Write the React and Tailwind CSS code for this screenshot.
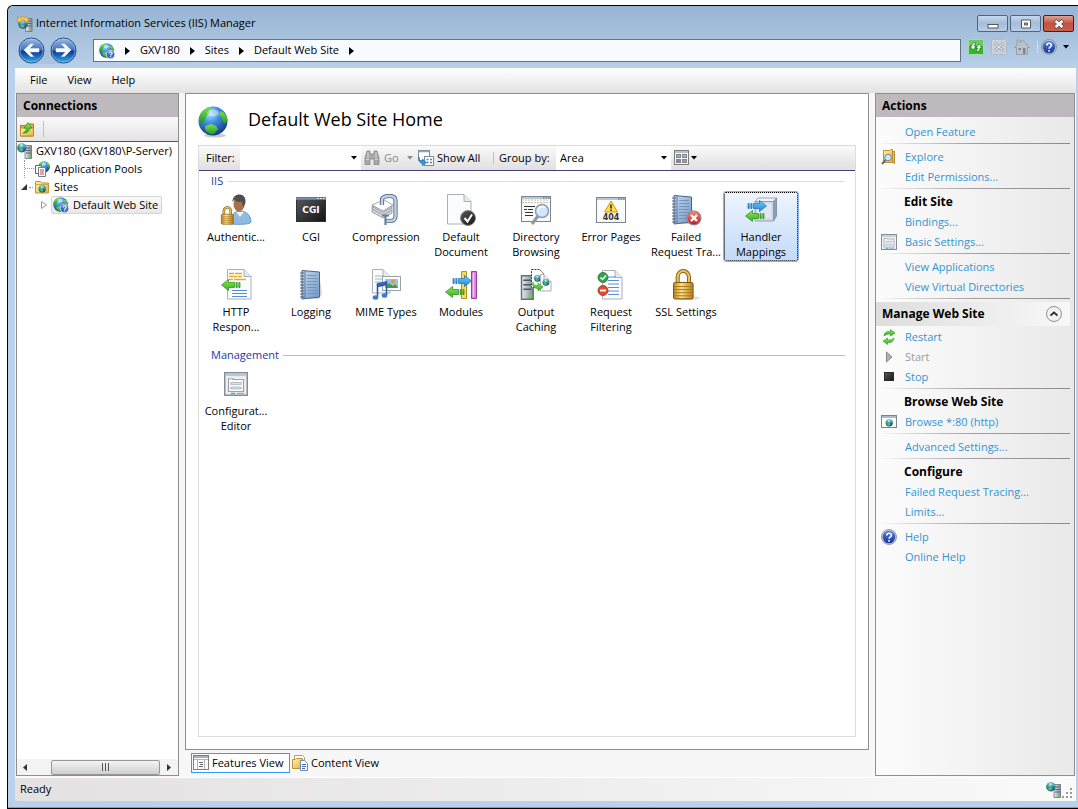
import React from 'react';
import clsx from 'clsx';

// Gradients shared by all the icons below
const IconDefs = () => (
    <svg className="absolute h-0 w-0" aria-hidden="true">
        <defs>
            <radialGradient id="sea" cx="0.4" cy="0.25" r="0.8">
                <stop offset="0" stopColor="#a8e2fb" />
                <stop offset="0.4" stopColor="#3f8fe0" />
                <stop offset="1" stopColor="#12307f" />
            </radialGradient>
            <linearGradient id="land" x1="0" y1="0" x2="0" y2="1">
                <stop offset="0" stopColor="#7be04c" />
                <stop offset="1" stopColor="#1c9a26" />
            </linearGradient>
            <linearGradient id="nav" x1="0" y1="0" x2="0" y2="1">
                <stop offset="0" stopColor="#9dbbe6" />
                <stop offset="0.48" stopColor="#3f70c0" />
                <stop offset="0.52" stopColor="#0c3590" />
                <stop offset="1" stopColor="#2fb4f2" />
            </linearGradient>
            <linearGradient id="gold" x1="0" y1="0" x2="1" y2="0">
                <stop offset="0" stopColor="#c08a1e" />
                <stop offset="0.4" stopColor="#fbe08a" />
                <stop offset="1" stopColor="#b47d18" />
            </linearGradient>
            <linearGradient id="folder" x1="0" y1="0" x2="1" y2="1">
                <stop offset="0" stopColor="#fff2a8" />
                <stop offset="1" stopColor="#e3b23c" />
            </linearGradient>
            <linearGradient id="steel" x1="0" y1="0" x2="1" y2="0">
                <stop offset="0" stopColor="#e9edf1" />
                <stop offset="1" stopColor="#7f8a96" />
            </linearGradient>
            <linearGradient id="book" x1="0" y1="0" x2="1" y2="1">
                <stop offset="0" stopColor="#c4d9ef" />
                <stop offset="1" stopColor="#6f95c2" />
            </linearGradient>
            <linearGradient id="green" x1="0" y1="0" x2="0" y2="1">
                <stop offset="0" stopColor="#8fea5a" />
                <stop offset="1" stopColor="#2fae1c" />
            </linearGradient>
            <linearGradient id="blue" x1="0" y1="0" x2="0" y2="1">
                <stop offset="0" stopColor="#6fd0ff" />
                <stop offset="1" stopColor="#1b86dc" />
            </linearGradient>
            <linearGradient id="red" x1="0" y1="0" x2="0" y2="1">
                <stop offset="0" stopColor="#f58a7c" />
                <stop offset="1" stopColor="#c01818" />
            </linearGradient>
            <linearGradient id="dark" x1="0" y1="0" x2="1" y2="1">
                <stop offset="0" stopColor="#5a5a5a" />
                <stop offset="1" stopColor="#141414" />
            </linearGradient>
            <linearGradient id="help" x1="0" y1="0" x2="0" y2="1">
                <stop offset="0" stopColor="#5f83dd" />
                <stop offset="1" stopColor="#12329a" />
            </linearGradient>
        </defs>
    </svg>
);

const Svg = ({ size = 16, box = 16, className, children }) => (
    <svg
        width={size}
        height={size}
        viewBox={`0 0 ${box} ${box}`}
        className={clsx('shrink-0', className)}
        aria-hidden="true"
    >
        {children}
    </svg>
);

/* ---------- small parts ---------- */

const Earth = ({ x = 0, y = 0, s = 1 }) => (
    <g transform={`translate(${x} ${y}) scale(${s})`}>
        <circle cx="15" cy="15" r="14.5" fill="url(#sea)" />
        <path d="M1.500 17C0 11 4 4 10 1.500l3 .5-2 3 1 2-4 3-1 4-3 3z" fill="url(#land)" />
        <path d="M23 5c4 2 6 5 6.500 9l-2 4-3-3-1-4-3-2z" fill="url(#land)" />
        <path d="M7 20l6-2 5 2 2 3-4 5c-4 1-7-1-9-5z" fill="url(#land)" />
        <ellipse cx="15" cy="7" rx="6" ry="3.500" fill="#fff" opacity="0.4" />
    </g>
);

const Tower = ({ x = 0, y = 0, s = 1 }) => (
    <g transform={`translate(${x} ${y}) scale(${s})`}>
        <path d="M0 1h6.500V14H0z" fill="url(#steel)" stroke="#66707a" strokeWidth="0.8" />
        <path d="M1 3.500h4.500M1 6h4.500M1 8.500h4.500" stroke="#4c5862" strokeWidth="0.9" />
        <rect x="4" y="11.500" width="2" height="1.500" fill="#58e01c" />
    </g>
);

const Padlock = ({ x = 0, y = 0, s = 1 }) => (
    <g transform={`translate(${x} ${y}) scale(${s})`}>
        <path d="M4.500 15V8a5.500 6 0 0 1 11 0v7" fill="none" stroke="#8c6414" strokeWidth="4" />
        <path d="M4.500 15V8a5.500 6 0 0 1 11 0v7" fill="none" stroke="#e9c260" strokeWidth="2" />
        <rect x="0.500" y="13" width="19" height="16" rx="2" fill="url(#gold)" stroke="#80580e" />
        <path d="M1 17h18M1 20h18M1 23h18M1 26h18" stroke="#a87418" strokeWidth="0.9" />
    </g>
);

const Page = ({ x, y, w = 22, h = 30 }) => (
    <g transform={`translate(${x} ${y})`}>
        <path d={`M.5.5H${w - 7}L${w} 7.500V${h}H.5z`} fill="#fbfcfd" stroke="#aab0b6" />
        <path d={`M${w - 7} .5v7h7`} fill="#e6eaee" stroke="#aab0b6" />
    </g>
);

const Notebook = ({ x = 0, y = 0 }) => (
    <g transform={`translate(${x} ${y})`}>
        <path d="M19 4l3 21-3 5H9z" fill="#8a96a4" opacity="0.4" />
        <path d="M2 1.500L19.500 3v25L2 30z" fill="url(#book)" stroke="#4a658c" />
        <path d="M5 2v27" stroke="#4a658c" strokeWidth="0.8" />
        <path d="M7 6.500h10M7 9.500h10M7 12.500h10M7 15.500h10M7 18.500h10M7 21.500h10M7 24.500h10" stroke="#6c8cb8" strokeWidth="0.8" />
        <path d="M0 4h4M0 7h4M0 10h4M0 13h4M0 16h4M0 19h4M0 22h4M0 25h4M0 28h4" stroke="#56657a" />
    </g>
);

const WindowFrame = ({ x = 1, y = 3, w = 29, h = 25 }) => (
    <g transform={`translate(${x} ${y})`}>
        <rect x="0.500" y="0.500" width={w} height={h} fill="#fbfbfc" stroke="#7c858e" />
        <path d={`M1 2h${w - 1}`} stroke="#b7c6d8" strokeWidth="2" />
        <path d={`M${w - 7} 2h1.500M${w - 4.500} 2h1.500M${w - 2} 2h1.500`} stroke="#4d6c95" strokeWidth="1.200" />
    </g>
);

const ArrowLeft = ({ x = 0, y = 0 }) => (
    <g transform={`translate(${x} ${y})`} fill="url(#green)" stroke="#278a1b" strokeWidth="0.7">
        <path d="M.5 6L7.500 .5V3.500h6v5h-6v3z" />
        <path d="M15 3.500h1.200v5H15zM17.800 3.500h1.200v5h-1.200z" />
    </g>
);

const ArrowRight = ({ x = 0, y = 0 }) => (
    <g transform={`translate(${x} ${y})`} fill="url(#blue)" stroke="#1b6cae" strokeWidth="0.7">
        <path d="M19.500 6L12.500 .5V3.500h-6v5h6v3z" />
        <path d="M1 3.500h1.200v5H1zM3.800 3.500h1.200v5H3.800z" />
    </g>
);

/* ---------- 16px icons ---------- */

const GlobeHelpIcon = () => (
    <Svg>
        <Earth s={0.5} />
        <circle cx="11.500" cy="11.500" r="4.300" fill="#3f68c4" stroke="#e4ecf8" strokeWidth="0.8" />
        <path d="M10 10.500c0-2.200 3.200-2 3.200-.2 0 1.200-1.600 1-1.600 2.300M11.600 13.300v1" fill="none" stroke="#fff" strokeWidth="1.200" />
    </Svg>
);

const ServerIcon = () => (
    <Svg>
        <Tower x={8} y={1.5} s={1} />
        <Earth s={0.32} />
    </Svg>
);

const AppIcon = () => (
    <Svg>
        <Tower x={8.5} y={1.5} s={1} />
        <Earth x={1} y={3} s={0.33} />
        <path d="M.5 6V.5l2 1.500C5 .5 8 .5 9.500 2L11 1v5H6.500L8 4.500C6.500 3.500 5 3.500 4 4.500L5.500 6z" fill="#fbce4c" stroke="#c98a14" strokeWidth="0.7" />
    </Svg>
);

const FolderUpIcon = () => (
    <Svg>
        <path d="M1.500 4.500h5L8 3h6.500v12h-13z" fill="#e2b750" stroke="#a87b1c" />
        <path d="M1.500 7h13v8h-13z" fill="url(#folder)" stroke="#b98e2c" />
        <path d="M4 12c2.500-1 3.500-3 3.500-5H5L9 1.500 13 7h-2.500C10.500 10.500 8 12.500 4 12z" fill="url(#green)" stroke="#2c8f1c" strokeWidth="0.7" />
    </Svg>
);

const AppPoolIcon = () => (
    <Svg>
        <Earth x={4} s={0.4} />
        <path d="M1.500 4.500h6v8h-6z" fill="#fff" stroke="#b04a3c" />
        <path d="M4.500 6.500h7v9h-7z" fill="#fff" stroke="#6f7e90" />
        <path d="M6 9h4M6 11h4M6 13h4" stroke="#c0473a" />
    </Svg>
);

const SitesIcon = () => (
    <Svg>
        <path d="M1.500 2.500h5L8 4h6.500v10h-13z" fill="url(#folder)" stroke="#c3963a" />
        <path d="M1.500 5.500h13" stroke="#d3a848" />
        <Earth x={4.5} y={6} s={0.25} />
    </Svg>
);

const ExploreIcon = () => (
    <Svg>
        <path d="M2.500 1.500h6l1-1h2v13h-9z" fill="url(#folder)" stroke="#c09430" />
        <path d="M11.500 2.500h2v12l-2-1z" fill="#e8bf50" stroke="#b98b28" />
        <circle cx="7" cy="8.500" r="3.300" fill="#cfe6f7" stroke="#6f8599" />
        <path d="M4.500 11L1 15" stroke="#7c6a58" strokeWidth="2" />
    </Svg>
);

const SettingsIcon = ({ size = 16 }) => (
    <Svg size={size}>
        <rect x="0.500" y="0.500" width="15" height="15" fill="#eef0f2" stroke="#868d94" />
        <path d="M1 2h14" stroke="#b9c6d6" strokeWidth="1.500" />
        <path d="M3 13V4.500h3V5h7v8z" fill="#fff" stroke="#98a0a8" strokeWidth="0.8" />
        <path d="M4.500 7h7v1.300h-7zM4.500 10h7v1.300h-7z" fill="#dfe4e8" stroke="#a3abb2" strokeWidth="0.5" />
        <path d="M4.500 14.300h3" stroke="#28c0e8" />
        <path d="M8.500 14.300h5" stroke="#a8aeb4" />
    </Svg>
);

const RestartIcon = () => (
    <Svg>
        <path d="M3 7c0-3.500 3-5 6.500-4.500V.5L14 4 9.500 7V5C7 4.800 5 5.500 3 7z" fill="url(#green)" stroke="#2c981c" strokeWidth="0.6" />
        <path d="M13 9c0 3.500-3 5-6.500 4.500v2L2 12l4.500-3v2c2.500.2 4.500-.5 6.500-2z" fill="url(#green)" stroke="#2c981c" strokeWidth="0.6" />
    </Svg>
);

const StartIcon = () => (
    <Svg>
        <path d="M5.500 3v10l5.500-5z" fill="#b0b0b0" stroke="#8a8a8a" />
    </Svg>
);

const StopIcon = () => (
    <Svg>
        <rect x="3.500" y="3.500" width="9" height="8" fill="url(#dark)" stroke="#2a2a2a" />
    </Svg>
);

const BrowseIcon = () => (
    <Svg>
        <rect x="0.500" y="1.500" width="15" height="12" fill="#fff" stroke="#7c858e" />
        <path d="M1 3h14" stroke="#a9bbd2" strokeWidth="2" />
        <Earth x={4.5} y={5} s={0.25} />
    </Svg>
);

const HelpIcon = () => (
    <Svg>
        <circle cx="8" cy="8" r="7.500" fill="#c9ced6" stroke="#7f8690" strokeWidth="0.8" />
        <circle cx="8" cy="8" r="6.300" fill="url(#help)" />
        <path d="M5.800 6.400c0-3 4.600-2.800 4.600-.2 0 1.800-2.300 1.500-2.300 3.500M8.100 11v1.700" fill="none" stroke="#fff" strokeWidth="1.600" />
    </Svg>
);

const BinocularsIcon = () => (
    <Svg>
        <path d="M3 1h3v3h4V1h3l2 7v6.500h-5V9H6v5.500H1V8z" fill="#a8a8a8" stroke="#868686" strokeWidth="0.8" />
        <path d="M2 9.500h3M11 9.500h3M4 2v6M12 2v6" stroke="#d8d8d8" />
    </Svg>
);

const ShowAllIcon = () => (
    <Svg>
        <rect x="0.500" y="0.500" width="11" height="10" fill="#fff" stroke="#808a96" />
        <path d="M1 1.500h10" stroke="#8fa6c6" strokeWidth="1.500" />
        <rect x="6.500" y="6.500" width="9" height="9" fill="#fff" stroke="#808a96" />
        <path d="M8.500 9.500h2M12 9.500h2M8.500 12.500h2M12 12.500h2" stroke="#5c7aa8" strokeWidth="1.500" />
        <path d="M1 7c0 3 1.500 4.500 3.500 4.500V9L8.500 12.500 4.500 16v-2.300C2 13.500.5 11 1 7z" fill="#2f9be8" stroke="#1b6cae" strokeWidth="0.6" />
    </Svg>
);

const ViewModeIcon = () => (
    <Svg>
        <rect x="0.500" y="0.500" width="14" height="14" fill="#fafafa" stroke="#7c7c7c" />
        <path d="M1 2h13" stroke="#b4c2d4" strokeWidth="2" />
        <rect x="2.500" y="4.500" width="4" height="3" fill="#8fc07c" stroke="#82868c" />
        <rect x="8.500" y="4.500" width="4" height="3" fill="#8ac4dc" stroke="#82868c" />
        <rect x="2.500" y="9.500" width="4" height="3" fill="#8f7ccc" stroke="#82868c" />
        <rect x="8.500" y="9.500" width="4" height="3" fill="#e08a6c" stroke="#82868c" />
    </Svg>
);

const FeaturesIcon = () => (
    <Svg>
        <rect x="0.500" y="0.500" width="15" height="14" fill="#fafafa" stroke="#7d7d7d" />
        <path d="M1 2h14" stroke="#a9b2bc" strokeWidth="2" />
        <path d="M1 4.500h14M4.500 5v9.500M11.500 5v9.500" stroke="#b5b5ac" />
        <path d="M6 7.500h4M7 9.500h3M6 11.500h4" stroke="#5d6a78" />
    </Svg>
);

const ContentIcon = () => (
    <Svg>
        <path d="M2.500.5h8l2 2v9h-10z" fill="#fff" stroke="#b8a060" />
        <path d="M.5 13.500v-9h3l1-1h6v10z" fill="url(#folder)" stroke="#c09434" />
        <path d="M8.500 5.500h4l3 3v7h-7z" fill="#fff" stroke="#7088a8" />
        <path d="M10 9.500h4M10 11.500h4M10 13.500h3" stroke="#3a6cb8" />
    </Svg>
);

const RefreshIcon = () => (
    <Svg>
        <rect x="0.500" y="0.500" width="15" height="15" rx="1" fill="#2eb82a" stroke="#a6dda4" />
        <path d="M1 1h14v6H1z" fill="#8ed98a" opacity="0.6" />
        <path d="M7.500 3.500C5 3.500 4 5 4 7H2l3 4 3-4H6.200c0-1 .3-1.500 1.300-1.500zM8.500 12.500c2.500 0 3.500-1.500 3.500-3.500h2l-3-4-3 4h1.800c0 1-.3 1.500-1.300 1.500z" fill="#fff" stroke="#1c5c1a" strokeWidth="0.6" />
    </Svg>
);

const CancelIcon = () => (
    <Svg>
        <rect x="0.500" y="0.500" width="15" height="15" rx="1" fill="#c9d2db" stroke="#b0bac4" />
        <path d="M3.500 4l9 8M12.500 4l-9 8" stroke="#8d959d" strokeWidth="2.800" />
        <path d="M3.500 4l9 8M12.500 4l-9 8" stroke="#dfe4e8" strokeWidth="1.400" />
    </Svg>
);

const HomeIcon = () => (
    <Svg>
        <path d="M3 1h3v3l2.500-3 7 7.500H13.500v7h-11v-7H.5L3 6z" fill="#bcc2c8" stroke="#959ca4" strokeWidth="0.9" />
        <path d="M4.500 9h2.500v2H4.500zM9 9h2.500v6H9z" fill="#7f868e" />
    </Svg>
);

const NavIcon = ({ back }) => (
    <Svg size={27} box={27}>
        <circle cx="13.500" cy="13.500" r="12.500" fill="url(#nav)" stroke="#23487f" />
        <circle cx="13.500" cy="13.500" r="11.500" fill="none" stroke="#b9d3f2" strokeWidth="0.8" opacity="0.7" />
        <path
            d="M6 13l6.500-6h3l-4 4.500h9.500v3.400H11.500l4 4.500h-3z"
            transform={back ? undefined : 'translate(27 0) scale(-1 1)'}
            fill="#fff"
            stroke="#dfe8f4"
            strokeWidth="0.6"
        />
    </Svg>
);

const Caret = ({ className = 'fill-black' }) => (
    <svg width="6" height="4" viewBox="0 0 6 4" className={clsx('shrink-0', className)} aria-hidden="true">
        <path d="M0 0h6L3 3.500z" />
    </svg>
);

const Crumb = () => (
    <svg width="5" height="8" viewBox="0 0 5 8" className="shrink-0" aria-hidden="true">
        <path d="M0 0l5 4-5 4z" />
    </svg>
);

/* ---------- 32px feature icons ---------- */

const icons = {
    auth: (
        <>
            <path d="M11 30c0-9 3-13 9-13s11 4 11 11c0 2-10 3-20 2z" fill="#8fbbe0" stroke="#5c8ab8" strokeWidth="0.8" />
            <path d="M16 18l4 5 4-5z" fill="#e8f2fb" />
            <ellipse cx="19" cy="10" rx="5.500" ry="7.500" fill="#a8714a" />
            <path d="M12.500 8c0-5 3-7.500 7-7.500s6.500 3 6 8l-2 5-2-6c-3 1-6 0-7-2z" fill="#4f4f52" />
            <Padlock x={1} y={12} s={0.63} />
        </>
    ),
    cgi: (
        <>
            <rect x="1.500" y="3.500" width="29" height="24" fill="url(#dark)" stroke="#2b3038" />
            <path d="M1 4.500h30" stroke="#7391b8" strokeWidth="2.500" />
            <path d="M22 4.500h2M25 4.500h2M28 4.500h2" stroke="#d6e2f0" strokeWidth="1.200" />
            <text x="16" y="19" textAnchor="middle" fontFamily="DejaVu Sans" fontWeight="bold" fontSize="9" fill="#fff">CGI</text>
        </>
    ),
    compression: (
        <>
            <path d="M2 18l11 6 9-5v-7L2 12z" fill="#d3d6da" stroke="#8d939a" strokeWidth="0.8" />
            <path d="M2 15l11 6 9-5M2 12.500l11 6 9-5" fill="none" stroke="#8d939a" strokeWidth="0.8" />
            <path d="M2 11l12-5 9 5-10 6z" fill="#fff" stroke="#8d939a" strokeWidth="0.8" />
            <path d="M12 11V6c0-3 3-4 8-4 4 0 5.500 2 5.500 5v15c0 4-2 5-6 5h-3" fill="none" stroke="#51698c" strokeWidth="4.200" />
            <path d="M12 11V6c0-3 3-4 8-4 4 0 5.500 2 5.500 5v15c0 4-2 5-6 5h-3" fill="none" stroke="#c3d3e6" strokeWidth="2.400" />
            <path d="M15.500 31v-9M12 21.500h7" stroke="#6c7f98" strokeWidth="2.200" />
        </>
    ),
    defaultDoc: (
        <>
            <Page x={2} y={0} w={24} h={30} />
            <circle cx="23" cy="24" r="7.500" fill="url(#dark)" stroke="#8b8b8b" />
            <path d="M19.500 24l3 3.500 4.500-7" fill="none" stroke="#fff" strokeWidth="2" />
        </>
    ),
    directory: (
        <>
            <WindowFrame x={1} y={2} />
            <path d="M2 6h27M2 8.500h27" stroke="#c9c3a4" strokeWidth="1.200" strokeDasharray="2 1" />
            <path d="M4 12.500h11M4 15.500h3M8 15.500h5M5 18.500h8M5 21.500h8" stroke="#333" strokeWidth="1.100" />
            <path d="M18 22l-6 8" stroke="#8d9aa8" strokeWidth="3" />
            <circle cx="22" cy="17" r="6.500" fill="#cfe8fb" stroke="#8a9eb4" strokeWidth="1.500" />
            <path d="M18 16c1-3 4-4 7-3" stroke="#fff" strokeWidth="1.500" fill="none" />
        </>
    ),
    errorPages: (
        <>
            <WindowFrame />
            <path d="M16 7l6.500 11h-13z" fill="#ffdf3c" stroke="#c99a10" strokeLinejoin="round" />
            <path d="M16 10.500v4M16 15.500v1.500" stroke="#222" strokeWidth="1.500" />
            <text x="16" y="26" textAnchor="middle" fontFamily="DejaVu Sans" fontWeight="bold" fontSize="8" fill="#333">404</text>
        </>
    ),
    failed: (
        <>
            <Notebook x={2} />
            <circle cx="24" cy="24" r="7" fill="url(#red)" stroke="#8c8c8c" strokeWidth="1.200" />
            <path d="M21 21l6 6M27 21l-6 6" stroke="#fff" strokeWidth="2.400" />
        </>
    ),
    handler: (
        <>
            <path d="M10 7.500l3-3.500h19l-3 3.500z" fill="#eef3f8" stroke="#8593a3" strokeWidth="0.8" />
            <path d="M28.500 7.500l3-3.500v18l-3 5z" fill="#8fa0b4" stroke="#7686a0" strokeWidth="0.8" />
            <path d="M10 7.500h18.500v19.500H10z" fill="#cbd7e4" stroke="#8593a3" strokeWidth="0.8" />
            <path d="M12 9.500h14.500v15H12z" fill="#dfe8f1" />
            <ArrowRight x={2} y={6} />
            <ArrowLeft x={0} y={16} />
        </>
    ),
    http: (
        <>
            <Page x={7} y={0} w={24} h={30} />
            <path d="M9 4.500h5M15 4.500h7M9 7.500h8M18 7.500h4M9 10.500h4M14 10.500h12" stroke="#e0ac28" strokeWidth="1.300" />
            <path d="M12 21.500h15M12 24.500h15M12 27.500h15" stroke="#4f8fd8" strokeWidth="1.200" />
            <ArrowLeft x={1} y={10} />
        </>
    ),
    logging: <Notebook x={5} />,
    mime: (
        <>
            <Page x={2} y={0} w={18} h={24} />
            <path d="M5 7h9M5 10h9M5 13h6" stroke="#a6b2be" />
            <rect x="12.500" y="7.500" width="18" height="14" fill="#fff" stroke="#9aa4ae" />
            <rect x="15" y="10" width="13" height="9" fill="#8cc6f0" />
            <path d="M15 19l4-5 4 3 2-2 3 4z" fill="#4a9a3c" />
            <circle cx="23" cy="12.500" r="2" fill="#f0903c" />
            <path d="M7.500 28V15l9-2v13" fill="none" stroke="#2c5cb0" strokeWidth="1.600" />
            <path d="M7.500 17l9-2" stroke="#2c5cb0" strokeWidth="2.400" />
            <ellipse cx="5.500" cy="28.500" rx="2.800" ry="2.200" fill="#3f78d0" />
            <ellipse cx="14.500" cy="26.500" rx="2.800" ry="2.200" fill="#3f78d0" />
        </>
    ),
    modules: (
        <>
            <path d="M16.500 2.500h5v27h-5z" fill="#f2dc5c" stroke="#b39420" />
            <path d="M26.500 2.500h5v27h-5z" fill="#d884dc" stroke="#94409c" />
            <path d="M28.500 4v24" stroke="#f0c0f2" strokeWidth="1.500" />
            <ArrowRight x={7} y={6} />
            <ArrowLeft x={0} y={17} />
        </>
    ),
    output: (
        <>
            <Tower x={1.5} y={5} s={1.8} />
            <path d="M11.500.5h8l4 4v14h-12z" fill="#fff" stroke="#444" strokeDasharray="2 1" />
            <Earth x={14} y={6} s={0.23} />
            <Page x={20} y={5} w={11} h={17} />
            <Earth x={22.5} y={10} s={0.23} />
            <path d="M13 13c0 3 2 3.500 5 3.500v-2.500l5 4-5 4v-2.500c-4 0-6-2-5-6.500z" fill="url(#green)" stroke="#2c8f1c" strokeWidth="0.6" />
        </>
    ),
    request: (
        <>
            <Page x={7} y={1} w={20} h={29} />
            <path d="M13 8h8M13 11.500h11M13 15h11M13 18.500h11M13 22h11M13 25.500h11" stroke="#5a8ed0" />
            <circle cx="8" cy="8.500" r="5" fill="#34a04a" stroke="#1f7430" strokeWidth="0.8" />
            <path d="M5.500 8.500l2 2 3.500-4" fill="none" stroke="#fff" strokeWidth="1.500" />
            <circle cx="8" cy="21.500" r="5" fill="#e04a30" stroke="#a82a18" strokeWidth="0.8" />
            <path d="M5 21.500h6" stroke="#fff" strokeWidth="2" />
        </>
    ),
    ssl: (
        <>
            <ellipse cx="18" cy="29" rx="12" ry="2" fill="#000" opacity="0.12" />
            <Padlock x={3} y={0} s={1.03} />
        </>
    ),
};

const iisFeatures = [
    { icon: 'auth', lines: ['Authentic...'] },
    { icon: 'cgi', lines: ['CGI'] },
    { icon: 'compression', lines: ['Compression'] },
    { icon: 'defaultDoc', lines: ['Default', 'Document'] },
    { icon: 'directory', lines: ['Directory', 'Browsing'] },
    { icon: 'errorPages', lines: ['Error Pages'] },
    { icon: 'failed', lines: ['Failed', 'Request Tra...'] },
    { icon: 'handler', lines: ['Handler', 'Mappings'], selected: true },
    { icon: 'http', lines: ['HTTP', 'Respon...'] },
    { icon: 'logging', lines: ['Logging'] },
    { icon: 'mime', lines: ['MIME Types'] },
    { icon: 'modules', lines: ['Modules'] },
    { icon: 'output', lines: ['Output', 'Caching'] },
    { icon: 'request', lines: ['Request', 'Filtering'] },
    { icon: 'ssl', lines: ['SSL Settings'] },
];

const Feature = ({ lines, selected, children }) => (
    <button
        className={clsx(
            'flex h-[69px] flex-col items-center rounded-xs border pt-px leading-[15px] whitespace-nowrap',
            selected
                ? 'border-dotted border-black bg-linear-to-b from-[#eef5fd] to-[#c3daf8] outline outline-[#86b4ea]'
                : 'border-transparent'
        )}
    >
        <span className="mb-[3px] flex h-8 items-center">{children}</span>
        {lines.map((line) => (
            <span key={line}>{line}</span>
        ))}
    </button>
);

const GroupTitle = ({ children, line }) => (
    <h2 className="mr-2.5 ml-3 flex h-5 items-center gap-1 text-[#1c3a9c]">
        {children}
        <span className={clsx('h-px flex-1', line)} />
    </h2>
);

/* ---------- side panels ---------- */

const PanelTitle = ({ children }) => (
    <h2 className="h-[23px] shrink-0 bg-[#bdb9bc] px-1.5 text-[12px] leading-[23px] font-bold">{children}</h2>
);

const Action = ({ icon, disabled, children }) => (
    <li className="flex h-5 items-center gap-2 pl-[5px]">
        <span className="flex w-4">{icon}</span>
        {disabled ? (
            <button disabled className="text-[#9c9c9c]">{children}</button>
        ) : (
            <a href="#" className="text-[#3494d0]">{children}</a>
        )}
    </li>
);

const ActionHeading = ({ children }) => (
    <li className="flex h-5 items-center pl-7 text-[12px] font-bold">{children}</li>
);

const Rule = () => (
    <li className="h-[5px] pt-px pr-1" aria-hidden="true">
        <div className="h-px bg-linear-to-r from-transparent via-[#a0a0a0] to-[#8a8a8a]" />
    </li>
);

const Connections = () => (
    <aside className="flex w-[163px] shrink-0 flex-col border border-[#8f8f8f] bg-white">
        <PanelTitle>Connections</PanelTitle>
        <div className="flex h-[25px] shrink-0 items-center gap-2 border-b border-[#555] bg-linear-to-b from-[#fafafa] to-[#e4e2e4] px-0.5">
            <button aria-label="Create New Connection"><FolderUpIcon /></button>
            <span className="h-4 w-px bg-[#c5c3b0]" />
        </div>
        <ul className="flex-1 overflow-hidden leading-[18px] whitespace-nowrap">
            <li className="flex h-[18px] items-center gap-[3px]"><ServerIcon />GXV180 (GXV180\P-Server)</li>
            <li className="flex h-[18px] items-center pl-[7px]">
                <span className="h-full w-[10px] border-l border-dotted border-[#999] pt-2">
                    <span className="block border-t border-dotted border-[#999]" />
                </span>
                <AppPoolIcon />
                <span className="ml-1">Application Pools</span>
            </li>
            <li className="flex h-[18px] items-center pl-1">
                <svg width="7" height="7" viewBox="0 0 7 7" aria-hidden="true">
                    <path d="M6 0v6H0z" fill="#333" />
                </svg>
                <span className="mx-px w-1 border-t border-dotted border-[#999]" />
                <SitesIcon />
                <span className="ml-1">Sites</span>
            </li>
            <li className="flex h-[18px] items-center gap-1 pl-6">
                <svg width="6" height="8" viewBox="0 0 6 8" aria-hidden="true">
                    <path d="M.5.5v7l5-3.500z" fill="#fff" stroke="#999" />
                </svg>
                <span className="flex h-[18px] items-center gap-1 rounded-xs border border-[#d5d5d5] bg-linear-to-b from-[#fafafa] to-[#e8e8e8] pr-[3px] pl-px">
                    <GlobeHelpIcon />
                    Default Web Site
                </span>
            </li>
        </ul>
        <div className="flex h-4 shrink-0 items-center justify-between bg-[#f3f3f3] px-1.5">
            <svg width="5" height="7" viewBox="0 0 5 7" aria-hidden="true"><path d="M4 0v7L0 3.500z" fill="#333" /></svg>
            <div className="ml-4 flex h-[15px] w-[109px] items-center justify-center gap-0.5 rounded-xs border border-[#979797] bg-linear-to-b from-[#f4f4f4] to-[#cfcfcf]">
                <span className="h-2 w-px bg-[#555]" />
                <span className="h-2 w-px bg-[#555]" />
                <span className="h-2 w-px bg-[#555]" />
            </div>
            <svg width="5" height="7" viewBox="0 0 5 7" aria-hidden="true"><path d="M0 0v7l4-3.500z" fill="#333" /></svg>
        </div>
    </aside>
);

const Actions = () => (
    <aside className="flex w-[200px] shrink-0 flex-col border border-[#8f8f8f] bg-linear-to-r from-[#fcfcfc] to-[#e9e9e9]">
        <PanelTitle>Actions</PanelTitle>
        <ul className="mt-[5px]">
            <Action>Open Feature</Action>
            <Rule />
            <Action icon={<ExploreIcon />}>Explore</Action>
            <Action>Edit Permissions...</Action>
            <Rule />
            <ActionHeading>Edit Site</ActionHeading>
            <Action>Bindings...</Action>
            <Action icon={<SettingsIcon />}>Basic Settings...</Action>
            <Rule />
            <Action>View Applications</Action>
            <Action>View Virtual Directories</Action>
            <Rule />
            <li className="mr-1 mb-px flex h-6 items-center justify-between bg-linear-to-r from-[#dedede] to-[#f8f8f8] pr-2 pl-1.5 text-[12px] font-bold">
                Manage Web Site
                <button aria-label="Collapse">
                    <Svg>
                        <circle cx="8" cy="8" r="7.500" fill="#f2f2f2" stroke="#8f8f8f" />
                        <path d="M4.500 9.500L8 6.500l3.500 3" fill="none" stroke="#333" strokeWidth="1.800" />
                    </Svg>
                </button>
            </li>
            <Action icon={<RestartIcon />}>Restart</Action>
            <Action icon={<StartIcon />} disabled>Start</Action>
            <Action icon={<StopIcon />}>Stop</Action>
            <Rule />
            <ActionHeading>Browse Web Site</ActionHeading>
            <Action icon={<BrowseIcon />}>Browse *:80 (http)</Action>
            <Rule />
            <Action>Advanced Settings...</Action>
            <Rule />
            <ActionHeading>Configure</ActionHeading>
            <Action>Failed Request Tracing...</Action>
            <Action>Limits...</Action>
            <Rule />
            <Action icon={<HelpIcon />}>Help</Action>
            <Action>Online Help</Action>
        </ul>
    </aside>
);

/* ---------- centre ---------- */

const FilterBar = () => (
    <div className="flex h-[25px] shrink-0 items-center border-b border-[#46407a] bg-linear-to-b from-[#fafafa] to-[#e1dfe0] pl-[7px]">
        <label htmlFor="filter" className="w-[34px]">Filter:</label>
        <div className="flex h-full w-[121px] items-center bg-white pr-1">
            <input id="filter" className="h-full w-0 flex-1 px-1 outline-none" />
            <button aria-label="Filter history"><Caret /></button>
        </div>
        <button className="ml-[3px] flex w-[49px] items-center gap-1 text-[#8a8a8a]" disabled>
            <BinocularsIcon />
            Go
            <Caret className="ml-auto fill-[#8a8a8a]" />
        </button>
        <button className="ml-[5px] flex w-[66px] items-center gap-[3px] whitespace-nowrap"><ShowAllIcon />Show All</button>
        <span className="ml-[9px] h-3 w-px bg-[#c5c3b0]" />
        <label htmlFor="group" className="ml-[5px] w-[57px] whitespace-nowrap">Group by:</label>
        <div className="relative h-full w-[115px] bg-white">
            <select id="group" className="h-full w-full appearance-none pl-1 outline-none">
                <option>Area</option>
            </select>
            <span className="pointer-events-none absolute top-2.5 right-1 flex"><Caret /></span>
        </div>
        <button className="ml-[3px] flex items-center gap-px" aria-label="View">
            <ViewModeIcon />
            <Caret />
        </button>
    </div>
);

const Home = () => (
    <main className="flex min-w-0 flex-1 flex-col">
        <div className="flex flex-1 flex-col border border-[#8f8f8f] bg-white p-3">
            <header className="flex h-[39px] items-start gap-[18px]">
                <Svg size={32} box={32}>
                    <ellipse cx="17" cy="29.500" rx="11" ry="2" fill="#000" opacity="0.2" />
                    <Earth />
                </Svg>
                <h1 className="text-[18px] leading-[27px]">Default Web Site Home</h1>
            </header>
            <div className="flex flex-1 flex-col border border-[#dcdcdc]">
                <FilterBar />
                <GroupTitle line="bg-[#cfe0ee]">IIS</GroupTitle>
                <div className="mt-px grid grid-cols-[repeat(auto-fill,74px)] gap-x-px gap-y-1.5">
                    {iisFeatures.map(({ icon, lines, selected }) => (
                        <Feature key={icon} lines={lines} selected={selected}>
                            <Svg size={32} box={32}>{icons[icon]}</Svg>
                        </Feature>
                    ))}
                </div>
                <div className="mt-[9px]">
                    <GroupTitle line="bg-[#aebbe0]">Management</GroupTitle>
                </div>
                <div className="mt-px grid grid-cols-[repeat(auto-fill,74px)]">
                    <Feature lines={['Configurat...', 'Editor']}><SettingsIcon size={24} /></Feature>
                </div>
            </div>
        </div>
        <div className="flex h-[26px] items-center gap-0.5 pl-1.5">
            <button className="flex h-5 w-[99px] items-center gap-[3px] border border-[#3399ff] bg-white pl-px whitespace-nowrap">
                <FeaturesIcon />Features View
            </button>
            <button className="flex items-center gap-[3px] whitespace-nowrap"><ContentIcon />Content View</button>
        </div>
    </main>
);

const WindowButton = ({ label, close, children }) => (
    <button
        aria-label={label}
        className={clsx(
            'flex h-[17px] w-[31px] items-center justify-center rounded-xs border',
            close
                ? 'border-[#4a1c20] bg-linear-to-b from-[#e0a090] via-[#c8503c] to-[#c4604c]'
                : 'border-[#52657c] bg-linear-to-b from-[#c5d8ee] via-[#a5bdd8] to-[#b6cee8]'
        )}
    >
        <svg width="12" height="10" viewBox="0 0 12 10" aria-hidden="true">{children}</svg>
    </button>
);

const App = () => (
    <div className="h-screen min-h-[600px] bg-white pt-[5px] pl-[7px] font-['Open_Sans','Noto_Sans',sans-serif] text-[11px] text-black">
        <IconDefs />
        <div className="flex h-full flex-col rounded-tl-md border-t border-b border-l border-black bg-[#b9d1ea]">
            <div className="flex h-full flex-col rounded-tl-md border-b border-b-[#2cc4dc] bg-linear-to-b from-[#98b4d2] to-[#b9d1ea] to-[64px] pb-[6px] pl-[7px]">
                <div className="flex h-[31px] shrink-0 items-center gap-[3px] pt-1 pr-1 pl-0.5">
                    <AppIcon />
                    <span className="flex-1">Internet Information Services (IIS) Manager</span>
                    <div className="flex gap-0.5">
                        <WindowButton label="Minimize">
                            <rect x="1" y="5.500" width="10" height="3.500" fill="#fff" stroke="#555" />
                        </WindowButton>
                        <WindowButton label="Maximize">
                            <path d="M1.500 1h9v8h-9zM4.500 4v2h3V4z" fill="#fff" stroke="#555" fillRule="evenodd" />
                        </WindowButton>
                        <WindowButton label="Close" close>
                            <path d="M2 1.500l8 7M10 1.500l-8 7" stroke="#555" strokeWidth="4" />
                            <path d="M2.500 2l7 6M9.500 2l-7 6" stroke="#fff" strokeWidth="2.400" />
                        </WindowButton>
                    </div>
                </div>

                <div className="flex h-[31px] shrink-0 items-start pr-[9px] pl-[3px]">
                    <div className="flex gap-[5px] rounded-full bg-[#a9c3e0]">
                        <button aria-label="Back"><NavIcon back /></button>
                        <button aria-label="Forward"><NavIcon /></button>
                    </div>
                    <nav className="mt-0.5 ml-4 flex h-[23px] flex-1 items-center gap-[10px] border border-[#5f7286] bg-[#f8fbff] pl-[5px]">
                        <GlobeHelpIcon />
                        <Crumb />
                        <a href="#">GXV180</a>
                        <Crumb />
                        <a href="#">Sites</a>
                        <Crumb />
                        <a href="#">Default Web Site</a>
                        <Crumb />
                    </nav>
                    <div className="mt-0.5 ml-[7px] flex items-center gap-[7px]">
                        <button aria-label="Refresh"><RefreshIcon /></button>
                        <button aria-label="Stop" disabled><CancelIcon /></button>
                        <button aria-label="Home" disabled><HomeIcon /></button>
                        <span className="-mr-1 h-3 w-px bg-[#e4e0cc]" />
                        <button className="flex items-center gap-1.5" aria-label="Help"><HelpIcon /><Caret /></button>
                    </div>
                </div>

                <div className="mr-0.5 flex min-h-0 flex-1 flex-col bg-[#f7f7f7]">
                    <div className="flex h-[25px] shrink-0 items-center gap-5 border-b border-[#e0e0e0] bg-linear-to-b from-white to-[#e4e4e4] pl-[15px]">
                        <button>File</button>
                        <button>View</button>
                        <button>Help</button>
                    </div>
                    <div className="flex min-h-0 flex-1 gap-1.5 px-px">
                        <Connections />
                        <Home />
                        <Actions />
                    </div>
                    <footer className="mt-px flex h-6 shrink-0 items-center justify-between border-t border-white bg-linear-to-r from-[#e3e1e2] to-[#fafafa] pr-1 pl-[5px]">
                        Ready
                        <span className="flex items-end">
                            <ServerIcon />
                            <svg width="10" height="10" viewBox="0 0 10 10" fill="#9a9a9a" aria-hidden="true">
                                <path d="M8 0h2v2H8zM4 4h2v2H4zM8 4h2v2H8zM0 8h2v2H0zM4 8h2v2H4zM8 8h2v2H8z" />
                            </svg>
                        </span>
                    </footer>
                </div>
            </div>
        </div>
    </div>
);

export default App;
